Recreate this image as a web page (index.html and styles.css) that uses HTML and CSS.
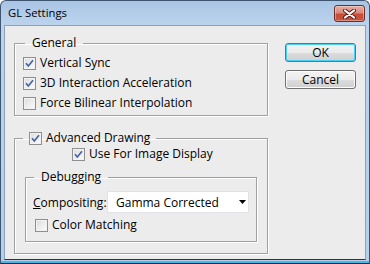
FILE: index.html
```html
<!DOCTYPE html>
<html>
<head>
<meta charset="utf-8">
<link rel="stylesheet" href="styles.css">
</head>
<body>
<div class="window">
  <div class="titlebar">
    <span class="title">GL Settings</span>
    <span class="close">
      <svg width="13" height="10" viewBox="0 0 13 10">
        <path d="M2 1.5 L11 8.5 M11 1.5 L2 8.5" stroke="#5a1a12" stroke-width="4" stroke-linecap="round"/>
        <path d="M2 1.5 L11 8.5 M11 1.5 L2 8.5" stroke="#ffffff" stroke-width="2.2" stroke-linecap="round"/>
      </svg>
    </span>
  </div>
  <div class="client">
    <div class="left">
      <fieldset class="group g-general">
        <legend>General</legend>
        <label class="row"><span class="cb"><svg viewBox="0 0 11 11"><path d="M2 5.3 L4.3 8 L9 2.3" fill="none" stroke="#4563a6" stroke-width="1.7"/></svg></span>Vertical Sync</label>
        <label class="row"><span class="cb"><svg viewBox="0 0 11 11"><path d="M2 5.3 L4.3 8 L9 2.3" fill="none" stroke="#4563a6" stroke-width="1.7"/></svg></span>3D Interaction Acceleration</label>
        <label class="row"><span class="cb"></span>Force Bilinear Interpolation</label>
      </fieldset>
      <fieldset class="group g-adv">
        <legend><span class="cb"><svg viewBox="0 0 11 11"><path d="M2 5.3 L4.3 8 L9 2.3" fill="none" stroke="#4563a6" stroke-width="1.7"/></svg></span>Advanced Drawing</legend>
        <label class="row row-image"><span class="cb"><svg viewBox="0 0 11 11"><path d="M2 5.3 L4.3 8 L9 2.3" fill="none" stroke="#4563a6" stroke-width="1.7"/></svg></span>Use For Image Display</label>
        <fieldset class="group g-debug">
          <legend>Debugging</legend>
          <div class="comp-row">
            <span class="comp-label"><u>C</u>ompositing:</span>
            <div class="select">
              <span>Gamma Corrected</span>
              <svg width="7" height="4" viewBox="0 0 7 4"><path d="M0 0 H7 L3.5 4 Z" fill="#000"/></svg>
            </div>
          </div>
          <label class="row row-color"><span class="cb"></span>Color Matching</label>
        </fieldset>
      </fieldset>
    </div>
    <div class="right">
      <button class="btn btn-default">OK</button>
      <button class="btn">Cancel</button>
    </div>
  </div>
</div>
</body>
</html>
```

FILE: styles.css
```css
html, body {
  margin: 0;
  padding: 0;
  background: #ffffff;
}

body {
  font-family: "Open Sans", "Liberation Sans", sans-serif;
  font-size: 12px;
  color: #000;
}

.window {
  width: 370px;
  height: 264px;
  box-sizing: border-box;
  border: 1px solid #3f5670;
  border-bottom-color: #1b2a3a;
  border-radius: 6px 6px 0 0;
  background: linear-gradient(#a9c5e4 0px, #bcd3ed 24px, #b5cfea 100%);
  display: flex;
  flex-direction: column;
  box-shadow: inset 0 -2px 0 #49b8e8;
}

.titlebar {
  height: 24px;
  display: flex;
  justify-content: space-between;
  align-items: flex-start;
  padding: 0 4px 0 7px;
}

.title {
  font-size: 11.3px;
  line-height: 16px;
  margin-top: 4px;
  color: #000;
}

.close {
  width: 31px;
  height: 17px;
  box-sizing: border-box;
  margin-top: 4px;
  border: 1px solid #6e2d25;
  border-radius: 3px;
  background: linear-gradient(#e9ada3 0%, #da8a7b 45%, #c74c37 55%, #c6553f 100%);
  box-shadow: inset 0 0 0 1px rgba(255,255,255,0.35);
  display: flex;
  align-items: center;
  justify-content: center;
}

.client {
  flex: 1;
  margin: 0 3px 3px 3px;
  background: #ececec;
  border: 1px solid #8aa2bd;
  border-bottom-color: #24384d;
  display: flex;
  padding: 9px 0 0 9px;
}

.left {
  width: 254px;
  display: flex;
  flex-direction: column;
}

.group {
  margin: 0;
  padding: 0;
  border: 1px solid #a0a0a0;
  box-shadow: 1px 1px 0 #ffffff, inset 1px 1px 0 #ffffff;
  min-width: 0;
}

.group legend {
  padding: 0 7px;
  margin-left: 10px;
  line-height: 16px;
  height: 16px;
  display: flex;
  align-items: center;
}

.g-general {
  padding: 2px 0 2px 0;
}

.g-general .row {
  padding-left: 8px;
}

.row {
  display: flex;
  align-items: center;
  height: 20px;
  line-height: 16px;
}

.cb {
  width: 13px;
  height: 13px;
  box-sizing: border-box;
  border: 1px solid #8e8f8f;
  background: linear-gradient(135deg, #dcdcdc 0%, #f0f0f0 60%, #fbfbfb 100%);
  box-shadow: inset 0 0 0 1px #f2f2f2;
  margin-right: 4px;
  flex: none;
  display: flex;
}

.cb svg {
  width: 11px;
  height: 11px;
}

.g-adv {
  margin-top: 14px;
  padding: 0 0 11px 0;
}

.g-adv > legend {
  margin-left: 8px;
  padding: 0 6px;
}

.row-image {
  height: 16px;
  padding-left: 57px;
}

.g-debug {
  margin: 7px 10px 0 10px;
  padding: 0 0 8px 0;
}

.g-debug > legend {
  margin-left: 8px;
  padding: 0 7px;
}

.comp-row {
  display: flex;
  align-items: center;
  margin-top: 6px;
  padding-left: 7px;
}

.comp-label {
  width: 74px;
}

.select {
  width: 142px;
  height: 22px;
  box-sizing: border-box;
  background: #ffffff;
  border: 1px solid #e0e2e8;
  display: flex;
  align-items: center;
  justify-content: space-between;
  padding: 0 2px 0 8px;
}

.row-color {
  height: 16px;
  margin-top: 4px;
  padding-left: 9px;
}

.right {
  display: flex;
  flex-direction: column;
  margin-left: 17px;
  padding-top: 8px;
  gap: 8px;
}

.btn {
  width: 71px;
  height: 19px;
  box-sizing: border-box;
  border: 1px solid #707070;
  border-radius: 3px;
  background: linear-gradient(#f3f3f3 0%, #ebebeb 50%, #dddddd 51%, #cfcfcf 100%);
  box-shadow: inset 0 0 0 1px #fcfcfc;
  font-family: inherit;
  font-size: 12px;
  line-height: 15px;
  padding: 0;
  color: #000;
}

.btn-default {
  border-color: #3c7fb1;
  box-shadow: inset 0 0 0 1px #48d0f8;
}
```
